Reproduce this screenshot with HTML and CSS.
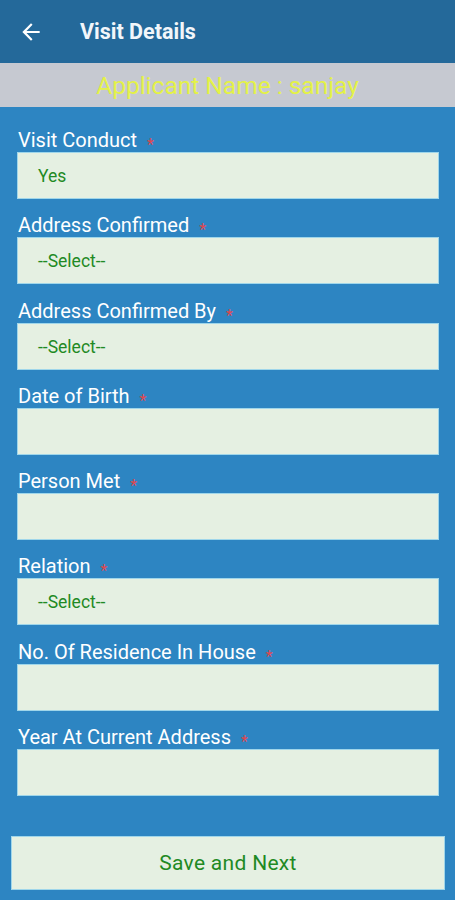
FILE: index.html
```html
<!DOCTYPE html>
<html lang="en">
<head>
    <title>Visit Details</title>
    <link rel="stylesheet" href="styles.css">
</head>
<body>
    <div class="toolbar">
        <svg class="back-icon" width="26" height="26" viewBox="0 0 24 24">
            <path d="M20 11H7.83l5.59-5.59L12 4l-8 8 8 8 1.41-1.41L7.83 13H20v-2z" fill="#ffffff"/>
        </svg>
        <h1>Visit Details</h1>
    </div>
    <div class="applicant-bar">Applicant Name : sanjay</div>

    <form class="visit-form">
        <div class="field">
            <label>Visit Conduct <span class="req">*</span></label>
            <div class="input-box">Yes</div>
        </div>
        <div class="field">
            <label>Address Confirmed <span class="req">*</span></label>
            <div class="input-box">--Select--</div>
        </div>
        <div class="field">
            <label>Address Confirmed By <span class="req">*</span></label>
            <div class="input-box">--Select--</div>
        </div>
        <div class="field">
            <label>Date of Birth <span class="req">*</span></label>
            <div class="input-box"></div>
        </div>
        <div class="field">
            <label>Person Met <span class="req">*</span></label>
            <div class="input-box"></div>
        </div>
        <div class="field">
            <label>Relation <span class="req">*</span></label>
            <div class="input-box">--Select--</div>
        </div>
        <div class="field">
            <label>No. Of Residence In House <span class="req">*</span></label>
            <div class="input-box"></div>
        </div>
        <div class="field">
            <label>Year At Current Address <span class="req">*</span></label>
            <div class="input-box"></div>
        </div>

        <button type="button" class="save-btn">Save and Next</button>
    </form>
</body>
</html>
```

FILE: styles.css
```css
body {
    font-family: Roboto, "Liberation Sans", sans-serif;
    margin: 0;
    padding: 0;
    background-color: #2d85c2;
    height: 900px;
    overflow: hidden;
}

.toolbar {
    height: 63px;
    background-color: #24699a;
    display: flex;
    align-items: center;
    padding-left: 18px;
    box-sizing: border-box;
}
.back-icon {
    margin-right: 36px;
}
.toolbar h1 {
    margin: 0;
    font-size: 21.5px;
    font-weight: 700;
    color: #f2f6fa;
}

.applicant-bar {
    height: 44px;
    background-color: #c6c9d1;
    color: #e4f247;
    font-size: 24.5px;
    text-align: center;
    line-height: 46px;
}

.visit-form {
    padding: 21px 16px 0 17px;
}

.field {
    margin-bottom: 14.3px;
}
.field label {
    display: block;
    height: 24px;
    color: #ffffff;
    font-size: 20px;
    line-height: 24px;
    padding-left: 1px;
}
.req {
    color: #e0474e;
    font-size: 16px;
    line-height: 0;
    margin-left: 5px;
    vertical-align: -3px;
}

.input-box {
    height: 47px;
    background-color: #e5f0e2;
    border: 1px solid #9fd6ea;
    box-sizing: border-box;
    color: #1f8a24;
    font-size: 17.5px;
    line-height: 46px;
    padding-left: 20px;
}

.save-btn {
    display: block;
    width: 434px;
    height: 54px;
    margin: 40px 0 0 -6px;
    background-color: #e5f0e2;
    border: 1px solid #9fd6ea;
    color: #1f8a24;
    font-family: Roboto, "Liberation Sans", sans-serif;
    font-size: 21px;
    letter-spacing: 0.3px;
}
```
